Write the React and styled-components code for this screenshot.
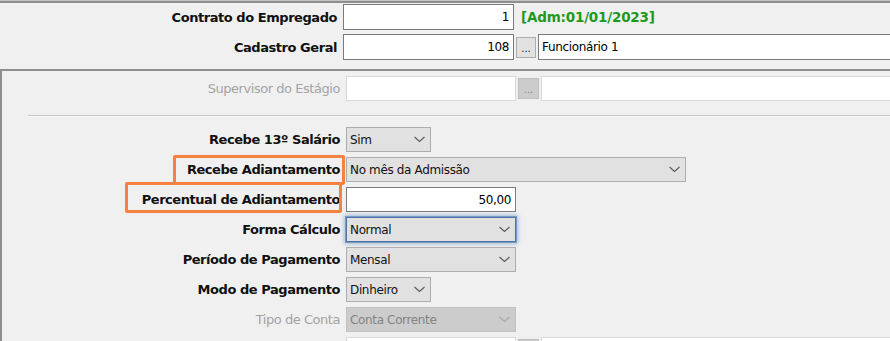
import React from 'react';
import styled, { createGlobalStyle, css } from 'styled-components';

const GlobalStyle = createGlobalStyle`
  html, body {
    margin: 0;
    padding: 0;
    background: #f0f0f0;
    overflow: hidden;
  }
  body {
    font-family: 'DejaVu Sans', 'Liberation Sans', sans-serif;
    font-size: 12px;
    color: #000;
  }
`;

const Screen = styled.div`
  width: 890px;
  height: 341px;
  overflow: hidden;
  background: #f0f0f0;
  border-top: 1px solid #c4c4c4;
  box-sizing: border-box;
`;

const Header = styled.div`
  border-top: 2px solid #8e8e8e;
  padding-top: 1px;
  display: flex;
  flex-direction: column;
  gap: 4px;
  padding-bottom: 9px;
  border-bottom: 2px solid #8e8e8e;
`;

const Panel = styled.div`
  border-left: 2px solid #8e8e8e;
  padding: 5px 0 0 1px;
  display: flex;
  flex-direction: column;
`;

const Row = styled.div`
  display: grid;
  grid-template-columns: 337px auto;
  column-gap: 6px;
  align-items: center;
  height: ${p => p.$h || 25}px;
  margin-top: ${p => p.$mt || 0}px;
`;

const Label = styled.span`
  justify-self: end;
  position: relative;
  white-space: nowrap;
  font-size: 13px;
  line-height: 15px;
  letter-spacing: -0.45px;
  font-weight: ${p => (p.$disabled ? 400 : 700)};
  color: ${p => (p.$disabled ? '#a3a3a3' : '#111')};
  ${p => p.$mark && css`
    &::before {
      content: '';
      position: absolute;
      top: ${p.$mark.top}px;
      bottom: ${p.$mark.bottom}px;
      left: ${p.$mark.left}px;
      right: ${p.$mark.right}px;
      border: 3px solid #f7813f;
      border-radius: 2px;
    }
  `}
`;

const Fields = styled.div`
  display: flex;
  align-items: center;
  gap: ${p => p.$gap ?? 2}px;
  height: 100%;
`;

const TextBox = styled.div`
  box-sizing: border-box;
  width: ${p => p.$w}px;
  flex: none;
  height: ${p => p.$h || 25}px;
  display: flex;
  align-items: center;
  justify-content: ${p => (p.$right ? 'flex-end' : 'flex-start')};
  padding: 0 4px 0 3px;
  background: #fff;
  border: 1px solid ${p => (p.$disabled ? '#d9d9d9' : '#7a7a7a')};
  font-size: 12px;
  letter-spacing: -0.35px;
  white-space: nowrap;
  overflow: hidden;
`;

const DotsButton = styled.div`
  box-sizing: border-box;
  width: ${p => p.$w || 20}px;
  height: ${p => p.$h || 21}px;
  flex: none;
  display: flex;
  align-items: flex-end;
  justify-content: center;
  padding-bottom: 3px;
  background: ${p => (p.$disabled ? '#cccccc' : '#e1e1e1')};
  border: 1px solid ${p => (p.$disabled ? '#bfbfbf' : '#adadad')};
  color: ${p => (p.$disabled ? '#8a8a8a' : '#111')};
  font-size: 10px;
  line-height: 1;
`;

const AdmText = styled.span`
  margin-left: 5px;
  font-weight: 700;
  font-size: 13.5px;
  letter-spacing: -0.2px;
  color: #1d9a1d;
  white-space: nowrap;
`;

const Separator = styled.div`
  margin: 14px 0 0 25px;
  height: 1px;
  background: #c4c4c4;
  border-bottom: 1px solid #fbfbfb;
`;

const SelectBox = styled.div`
  box-sizing: border-box;
  width: ${p => p.$w}px;
  height: 25px;
  display: flex;
  align-items: center;
  justify-content: space-between;
  padding: 0 5px 0 3px;
  background: ${p => (p.$disabled ? '#cccccc' : '#e1e1e1')};
  border: 1px solid ${p => (p.$disabled ? '#c2c2c2' : '#adadad')};
  color: ${p => (p.$disabled ? '#838383' : '#111')};
  font-size: 12px;
  letter-spacing: -0.35px;
  white-space: nowrap;
  ${p => p.$focused && css`
    border-color: #4d73a6;
    box-shadow: 0 0 0 1px rgba(100, 140, 190, 0.75), 0 0 4px 2px rgba(110, 150, 200, 0.6);
  `}
`;

const Chevron = ({ disabled }) => (
  <svg width="11" height="7" viewBox="0 0 11 7">
    <path
      d="M0.5 1 L5.5 5.5 L10.5 1"
      fill="none"
      stroke={disabled ? '#a8a8a8' : '#5a5a5a'}
      strokeWidth="1.1"
    />
  </svg>
);

const Select = ({ w, value, disabled, focused }) => (
  <SelectBox $w={w} $disabled={disabled} $focused={focused}>
    <span>{value}</span>
    <Chevron disabled={disabled} />
  </SelectBox>
);

const lower = [
  { label: 'Forma Cálculo', w: 170, value: 'Normal', focused: true },
  { label: 'Período de Pagamento', w: 170, value: 'Mensal' },
  { label: 'Modo de Pagamento', w: 85, value: 'Dinheiro' },
  { label: 'Tipo de Conta', w: 170, value: 'Conta Corrente', disabled: true },
];

export default function App() {
  return (
    <>
      <GlobalStyle />
      <Screen>
        <Header>
          <Row $h={26}>
            <Label>Contrato do Empregado</Label>
            <Fields>
              <TextBox $w={171} $h={26} $right>1</TextBox>
              <AdmText>[Adm:01/01/2023]</AdmText>
            </Fields>
          </Row>
          <Row $h={26}>
            <Label>Cadastro Geral</Label>
            <Fields>
              <TextBox $w={171} $h={26} $right>108</TextBox>
              <DotsButton>...</DotsButton>
              <TextBox $w={400} $h={26}>Funcionário 1</TextBox>
            </Fields>
          </Row>
        </Header>

        <Panel>
          <Row>
            <Label $disabled>Supervisor do Estágio</Label>
            <Fields>
              <TextBox $w={170} $disabled />
              <DotsButton $disabled $w={21}>...</DotsButton>
              <TextBox $w={400} $disabled />
            </Fields>
          </Row>

          <Separator />

          <Row $mt={10}>
            <Label>Recebe 13º Salário</Label>
            <Fields>
              <Select w={85} value="Sim" />
            </Fields>
          </Row>
          <Row $mt={5}>
            <Label $mark={{ top: -7, bottom: -8, left: -14, right: -5 }}>
              Recebe Adiantamento
            </Label>
            <Fields>
              <Select w={340} value="No mês da Admissão" />
            </Fields>
          </Row>
          <Row $mt={5}>
            <Label $mark={{ top: -10, bottom: -6, left: -17, right: -2 }}>
              Percentual de Adiantamento
            </Label>
            <Fields>
              <TextBox $w={170} $right>50,00</TextBox>
            </Fields>
          </Row>

          {lower.map(r => (
            <Row key={r.label} $mt={5}>
              <Label $disabled={r.disabled}>{r.label}</Label>
              <Fields>
                <Select w={r.w} value={r.value} disabled={r.disabled} focused={r.focused} />
              </Fields>
            </Row>
          ))}

          <Row $mt={5}>
            <Label $disabled />
            <Fields>
              <TextBox $w={170} $disabled />
              <DotsButton $disabled $w={21} />
              <TextBox $w={400} $disabled />
            </Fields>
          </Row>
        </Panel>
      </Screen>
    </>
  );
}
